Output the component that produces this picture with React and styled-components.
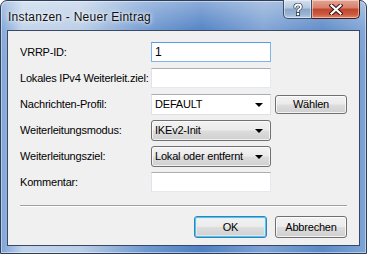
import React from "react";
import styled, { createGlobalStyle } from "styled-components";

const GlobalStyle = createGlobalStyle`
  html, body { margin: 0; padding: 0; background: #fff; overflow: hidden; }
  body { font-family: "Liberation Sans", Arial, sans-serif; }
`;

const Window = styled.div`
  box-sizing: border-box;
  width: 367px;
  height: 254px;
  display: flex;
  flex-direction: column;
  border: 1px solid #2d3f5a;
  border-radius: 7px 7px 0 0;
  padding: 0 6px 7px 6px;
  background:
    linear-gradient(180deg, rgba(255,255,255,0.35) 0px, rgba(255,255,255,0.05) 28px, rgba(0,0,0,0) 60px),
    linear-gradient(90deg, #7ea3d6 0%, #c2d4ea 6%, #b9cde6 22%, #6f98d0 40%, #4f80c4 55%, #7ea2d4 72%, #5c8ac8 88%, #7fa4d6 100%);
  box-shadow: inset 0 0 0 1px rgba(255,255,255,0.45);
`;

const TitleBar = styled.div`
  height: 29px;
  display: flex;
  align-items: flex-start;
  flex-shrink: 0;
`;

const Title = styled.div`
  font-family: "Segoe UI", "Liberation Sans", Arial, sans-serif;
  font-size: 12px;
  letter-spacing: 0.25px;
  color: #101010;
  padding: 9px 0 0 1px;
  text-shadow: 0 0 6px rgba(255,255,255,0.9), 0 0 3px rgba(255,255,255,0.9);
  white-space: nowrap;
`;

const Controls = styled.div`
  margin-left: auto;
  display: flex;
  height: 19px;
  margin-top: -1px;
`;

const CapButton = styled.div`
  box-sizing: border-box;
  height: 19px;
  width: ${p => p.$w}px;
  display: flex;
  align-items: center;
  justify-content: center;
  border: 1px solid ${p => (p.$red ? "#4b1a12" : "#3c4d66")};
  border-top: none;
  border-radius: ${p => (p.$red ? "0 0 5px 0" : "0 0 0 5px")};
  background: ${p =>
    p.$red
      ? "linear-gradient(180deg, #e8a493 0%, #d47f6b 45%, #c0442c 50%, #cc5a3f 80%, #e0886b 100%)"
      : "linear-gradient(180deg, #d5e0ee 0%, #b4c7df 45%, #8aa5c8 50%, #9ab3d3 80%, #b9cde6 100%)"};
  box-shadow: inset 0 0 0 1px rgba(255,255,255,0.45);
  & + & { border-left: none; }
`;

const Client = styled.div`
  flex: 1;
  box-sizing: border-box;
  background: #f0f0f0;
  border: 1px solid #3a4963;
  padding: 8px 12px 0 12px;
  display: flex;
  flex-direction: column;
  font-family: "Liberation Sans", Arial, sans-serif;
  font-size: 11px;
  letter-spacing: -0.2px;
  color: #000;
`;

const Form = styled.div`
  display: grid;
  grid-template-columns: 127px 120px 72px;
  column-gap: 4px;
  grid-auto-rows: 26px;
  align-items: center;
`;

const Label = styled.div`
  white-space: nowrap;
`;

const TextBox = styled.div`
  box-sizing: border-box;
  height: 20px;
  width: 120px;
  background: #fff;
  border: 1px solid #dbdfe6;
  border-top-color: #abadb3;
  border-left-color: #e2e3ea;
  border-right-color: #e3e9ef;
  border-bottom-color: #e3e9ef;
  padding: 0 3px;
  display: flex;
  align-items: center;
  font-size: ${p => (p.$big ? "12px" : "11px")};
  ${p => p.$focus && "border-color: #7eb4ea; border-top-color: #569de5;"}
`;

const Combo = styled.div`
  box-sizing: border-box;
  height: 21px;
  width: 120px;
  display: flex;
  align-items: center;
  justify-content: space-between;
  padding: 0 7px 0 3px;
  white-space: nowrap;
  border-radius: ${p => (p.$edit ? "0" : "3px")};
  border: 1px solid ${p => (p.$edit ? "#dde2e8" : "#707070")};
  ${p => p.$edit && "border-top-color: #abadb3;"}
  background: ${p =>
    p.$edit
      ? "#fff"
      : "linear-gradient(180deg, #f2f2f2 0%, #ebebeb 48%, #dddddd 52%, #cfcfcf 100%)"};
  box-shadow: ${p => (p.$edit ? "none" : "inset 0 0 0 1px rgba(255,255,255,0.7)")};
`;

const Arrow = styled.span`
  width: 0;
  height: 0;
  border-left: 4px solid transparent;
  border-right: 4px solid transparent;
  border-top: 4px solid #000;
  margin-top: 1px;
`;

const Button = styled.div`
  box-sizing: border-box;
  width: ${p => p.$w || 72}px;
  height: ${p => p.$h || 22}px;
  display: flex;
  align-items: center;
  justify-content: center;
  border-radius: 3px;
  border: 1px solid ${p => (p.$default ? "#3c7fb1" : "#707070")};
  background: linear-gradient(180deg, #f2f2f2 0%, #ebebeb 48%, #dddddd 52%, #cfcfcf 100%);
  box-shadow: ${p =>
    p.$default
      ? "inset 0 0 0 1px #48c8f0, inset 0 0 0 2px rgba(220,240,252,0.8)"
      : "inset 0 0 0 1px rgba(255,255,255,0.75)"};
  font-size: 11px;
`;

const Separator = styled.div`
  margin-top: 10px;
  height: 0;
  border-top: 1px solid #a0a0a0;
  border-bottom: 1px solid #ffffff;
`;

const ButtonRow = styled.div`
  display: flex;
  justify-content: flex-end;
  gap: 8px;
  margin-top: 9px;
`;

const HelpGlyph = () => (
  <svg width="10" height="13" viewBox="0 0 10 13">
    <path d="M2 4 Q2 1.5 5 1.5 Q8 1.5 8 4 Q8 5.6 6 6.4 Q5 6.9 5 8.3" fill="none" stroke="#2c3a4f" strokeWidth="3.2" strokeLinecap="round" />
    <path d="M2 4 Q2 1.5 5 1.5 Q8 1.5 8 4 Q8 5.6 6 6.4 Q5 6.9 5 8.3" fill="none" stroke="#fff" strokeWidth="1.8" strokeLinecap="round" />
    <rect x="3.4" y="9.6" width="3.2" height="3" fill="#fff" stroke="#2c3a4f" strokeWidth="0.8" />
  </svg>
);

const CloseGlyph = () => (
  <svg width="14" height="11" viewBox="0 0 14 11">
    <path d="M2.5 1.5 L11.5 9.5 M11.5 1.5 L2.5 9.5" stroke="#3b1410" strokeWidth="4.2" strokeLinecap="square" />
    <path d="M2.5 1.5 L11.5 9.5 M11.5 1.5 L2.5 9.5" stroke="#fff" strokeWidth="2.2" strokeLinecap="square" />
  </svg>
);

export default function App() {
  return (
    <>
      <GlobalStyle />
      <Window>
        <TitleBar>
          <Title>Instanzen - Neuer Eintrag</Title>
          <Controls>
            <CapButton $w={29}>
              <HelpGlyph />
            </CapButton>
            <CapButton $w={48} $red>
              <CloseGlyph />
            </CapButton>
          </Controls>
        </TitleBar>
        <Client>
          <Form>
            <Label>VRRP-ID:</Label>
            <TextBox $focus $big>1</TextBox>
            <span />

            <Label>Lokales IPv4 Weiterleit.ziel:</Label>
            <TextBox />
            <span />

            <Label>Nachrichten-Profil:</Label>
            <Combo $edit>
              <span>DEFAULT</span>
              <Arrow />
            </Combo>
            <Button $h={19}>Wählen</Button>

            <Label>Weiterleitungsmodus:</Label>
            <Combo>
              <span>IKEv2-Init</span>
              <Arrow />
            </Combo>
            <span />

            <Label>Weiterleitungsziel:</Label>
            <Combo>
              <span>Lokal oder entfernt</span>
              <Arrow />
            </Combo>
            <span />

            <Label>Kommentar:</Label>
            <TextBox />
            <span />
          </Form>
          <Separator />
          <ButtonRow>
            <Button $default $w={73}>OK</Button>
            <Button>Abbrechen</Button>
          </ButtonRow>
        </Client>
      </Window>
    </>
  );
}
